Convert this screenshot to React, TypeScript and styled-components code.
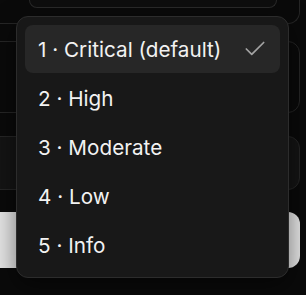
import React, { useState } from "react";
import styled, { createGlobalStyle } from "styled-components";
import { Check } from "lucide-react";

const GlobalStyle = createGlobalStyle`
  html, body {
    margin: 0;
    padding: 0;
    background: #0a0a0a;
    overflow: hidden;
  }
  * {
    box-sizing: border-box;
  }
`;

const options = [
  { value: 1, label: "1 · Critical (default)" },
  { value: 2, label: "2 · High" },
  { value: 3, label: "3 · Moderate" },
  { value: 4, label: "4 · Low" },
  { value: 5, label: "5 · Info" },
];

export default function App() {
  const [selected, setSelected] = useState(1);

  return (
    <>
      <GlobalStyle />
      <StyledPage>
        <StyledForm>
          <StyledSection>
            <StyledTrigger />
          </StyledSection>
          <StyledField $height={72} $gap={17} />
          <StyledField $height={54} $gap={23} $filled />
          <StyledButton />
        </StyledForm>

        <StyledMenu role="listbox">
          {options.map((option) => (
            <StyledItem
              key={option.value}
              role="option"
              aria-selected={selected === option.value}
              $active={selected === option.value}
              onClick={() => setSelected(option.value)}
            >
              <StyledLabel>{option.label}</StyledLabel>
              {selected === option.value && (
                <Check size={26} strokeWidth={1.6} color="#a3a3a3" />
              )}
            </StyledItem>
          ))}
        </StyledMenu>
      </StyledPage>
    </>
  );
}

const StyledPage = styled.div`
  position: relative;
  width: 306px;
  height: 295px;
  overflow: hidden;
  font-family: Inter, "Noto Sans", sans-serif;
`;

const StyledForm = styled.div`
  display: flex;
  flex-direction: column;
  width: 320px;
  margin-left: -20px;
`;

const StyledSection = styled.div`
  height: 24px;
  padding-left: 48px;
  padding-right: 22px;
  border: 1px solid #262626;
  border-top: none;
  border-radius: 0 0 12px 12px;
  background: #0a0a0a;
`;

const StyledTrigger = styled.div`
  height: 8px;
  border: 1px solid #2a2a2a;
  border-top: none;
  border-radius: 0 0 10px 10px;
  background: #0e0e0e;
`;

const StyledField = styled.div<{ $height: number; $gap: number; $filled?: boolean }>`
  height: ${(p) => p.$height}px;
  margin-top: ${(p) => p.$gap}px;
  border: 1px solid #262626;
  border-radius: 12px;
  background: ${(p) => (p.$filled ? "#141414" : "#0a0a0a")};
`;

const StyledButton = styled.div`
  height: 56px;
  margin-top: 22px;
  border-radius: 12px;
  background: #e5e5e5;
`;

const StyledMenu = styled.div`
  position: absolute;
  left: 16px;
  top: 16px;
  width: 273px;
  height: 262px;
  display: flex;
  flex-direction: column;
  gap: 1px;
  padding: 8px;
  border: 1px solid #2c2c2c;
  border-radius: 12px;
  background: #181818;
  box-shadow: 0 8px 24px rgba(0, 0, 0, 0.5);
`;

const StyledItem = styled.div<{ $active: boolean }>`
  height: 48px;
  flex-shrink: 0;
  display: flex;
  align-items: center;
  justify-content: space-between;
  padding: 0 12px 0 13px;
  border-radius: 8px;
  background: ${(p) => (p.$active ? "#272727" : "transparent")};
  cursor: pointer;
`;

const StyledLabel = styled.span`
  color: #f2f2f2;
  font-size: 20.7px;
  font-weight: 400;
  white-space: nowrap;
`;
